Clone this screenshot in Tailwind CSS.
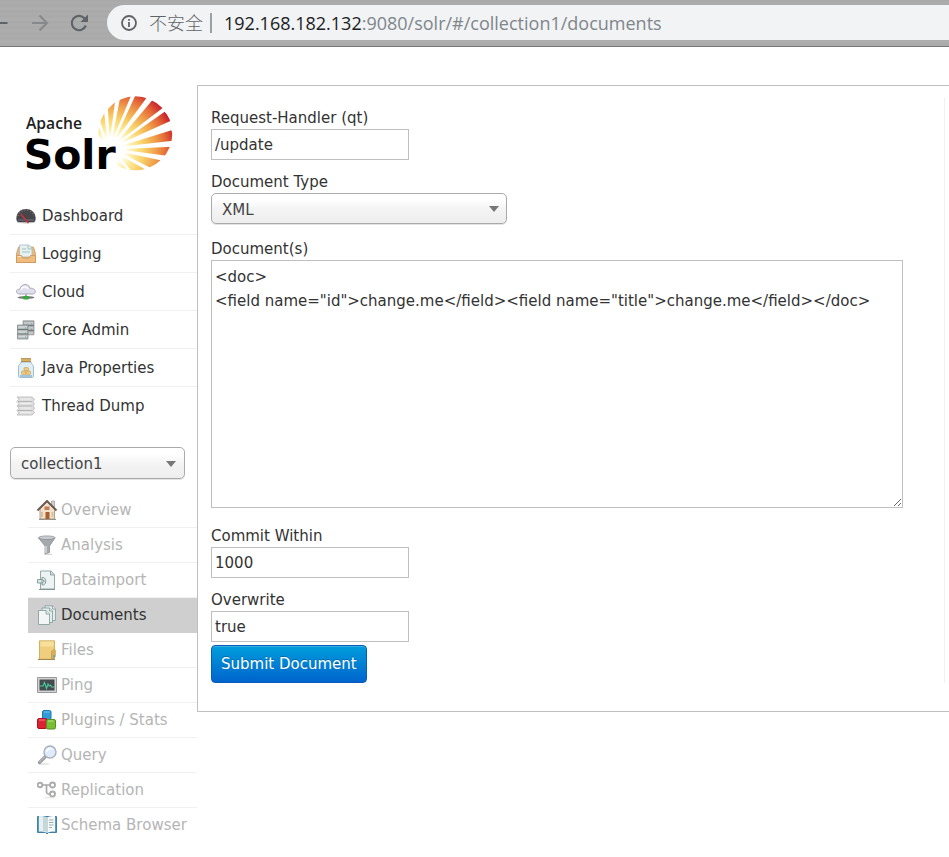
<!DOCTYPE html>
<html lang="en">
<head>
<meta charset="utf-8">
<title>Solr Admin</title>
<script src="https://cdn.jsdelivr.net/npm/@tailwindcss/browser@4"></script>
</head>
<body class="min-h-screen bg-white font-['DejaVu_Sans',sans-serif] text-[15px] leading-6 text-[#333]">

<header class="flex h-[47px] items-start overflow-hidden border-b border-[#777] bg-[#a9a9a9] bg-[repeating-linear-gradient(180deg,#a8a8a8_0px,#adadad_3px,#a9a9a9_5px,#aeaeae_9px,#a8a8a8_11px)] pt-[5px]">
  <div class="flex h-[35px] w-[107px] shrink-0 items-center">
    <button aria-label="Back" class="w-[30px]"><svg class="block h-6 w-[30px]" viewBox="0 0 30 24"><path d="M0 12h7.500" stroke="#5f6368" stroke-width="2" fill="none"/></svg></button>
    <button aria-label="Forward" class="w-[34px]"><svg class="block h-6 w-[34px]" viewBox="0 0 34 24"><path d="M2 12h15M9.500 4.500l7.500 7.500-7.500 7.500" stroke="#86888a" stroke-width="2" fill="none"/></svg></button>
    <button aria-label="Reload" class="w-[32px]"><svg class="block h-6 w-[32px]" viewBox="0 0 32 24"><path d="M21.800 14.500a7.200 7.200 0 1 1-1.600-7.500l2.500 2.500" stroke="#5f6368" stroke-width="2.200" fill="none"/><path d="M24 3.500v7.500h-7.500z" fill="#5f6368"/></svg></button>
  </div>
  <div class="flex h-[35px] min-w-0 flex-1 items-center rounded-l-full bg-[#f1f3f4] pl-[14px]">
    <svg class="size-4 shrink-0" viewBox="0 0 16 16"><circle cx="8" cy="8" r="7" fill="none" stroke="#5f6368" stroke-width="1.800"/><path d="M8 7v5M8 4v1.800" stroke="#5f6368" stroke-width="1.800"/></svg>
    <span class="ml-3 shrink-0 font-['Open_Sans','Noto_Sans_CJK_SC',sans-serif] text-[18px] font-light text-[#5f6368]">不安全</span>
    <span class="ml-[7px] h-5 w-0.5 shrink-0 bg-[#9aa0a6]"></span>
    <a href="#" class="ml-3 truncate font-['Open_Sans',sans-serif] text-[18px] text-[#80868b]"><span class="text-[#202124]">192.168.182.132</span>:9080/solr/#/collection1/documents</a>
  </div>
</header>

<div class="flex items-start pt-[38px]">
  <aside class="w-[197px] shrink-0 pl-[10px]">
    <a href="#" aria-label="Apache Solr" class="block">
      <svg class="block h-[100px] w-[187px]" viewBox="0 0 561 300">
        <defs>
          <radialGradient id="ray" gradientUnits="userSpaceOnUse" cx="305" cy="195" r="195">
            <stop offset="0.180" stop-color="#fff"/><stop offset="0.340" stop-color="#fdeb9c"/><stop offset="0.500" stop-color="#f9cf68"/><stop offset="0.680" stop-color="#f0a04b"/><stop offset="0.840" stop-color="#e56a38"/><stop offset="1" stop-color="#c8242b"/>
          </radialGradient>
          <clipPath id="disc"><circle cx="376" cy="145" r="111"/></clipPath>
        </defs>
        <g clip-path="url(#disc)" fill="url(#ray)">
          <path d="M288 178 258 146 264 120ZM294 176 268 103 281 72ZM299 174 294 72 315 50ZM304 174 330 40 364 30ZM310 174 379 25 416 30ZM316 177 428 44 462 66ZM320 181 464 80 486 106ZM323 186 484 136 494 167ZM324 193 486 185 470 212ZM324 199 452 226 424 250ZM320 205 408 254 366 260ZM315 210 356 260 322 244Z"/>
        </g>
        <text x="48" y="131" font-family="Open Sans" font-weight="600" font-size="47" fill="#222">Apache</text>
        <text x="41" y="253" font-family="DejaVu Sans" font-weight="700" font-size="123" fill="#000">Solr</text>
      </svg>
    </a>

    <nav aria-label="Main" class="mt-3">
      <ul class="divide-y divide-[#f0f0f0]">
        <li><a href="#" class="flex h-[37px] items-center gap-[6px] pl-[6px]">
          <svg class="size-5" viewBox="0 0 20 20"><ellipse cx="10" cy="16" rx="9.500" ry="1.500" fill="#bbb"/><path d="M.5 14C-.5 7 4.500 3 10 3s10.500 4 9.500 11c-.3 1.800-1.500 2-3 2h-13c-1.500 0-2.700-.2-3-2Z" fill="#45454a"/><path d="M2 10c2-8 14-8 16 0" fill="none" stroke="#77777c" stroke-width="1.500" stroke-dasharray="1 2"/><path d="M2 13h16v2H2z" fill="#5b5a70"/><path d="M4.500 8 12.500 17" stroke="#c93434" stroke-width="1.600"/></svg>
          <span>Dashboard</span></a></li>
        <li><a href="#" class="flex h-[37px] items-center gap-[6px] pl-[6px]">
          <svg class="size-5" viewBox="0 0 20 20"><path d="M2.500 3h15L20 11v7.500H0V11z" fill="#e5b981" stroke="#d49b61" stroke-width=".8"/><path d="M3.500 1h9l3.500 3v9H3.500z" fill="#e7f1f1" stroke="#a8bebe" stroke-width=".8"/><path d="M12 1v4h4M6 5h4M6 8h8" fill="none" stroke="#9fc0be"/><path d="M.5 11.500h5l1.500 2.500h6l1.500-2.500h5v7H.5z" fill="#efbd80" stroke="#cd9354" stroke-width=".8"/><path d="M1.500 12.500h3.500" stroke="#fbe4c2"/></svg>
          <span>Logging</span></a></li>
        <li><a href="#" class="flex h-[37px] items-center gap-[6px] pl-[6px]">
          <svg class="size-5" viewBox="0 0 20 20"><path d="M4 12C-1 12-.5 7 4 7.200 4.500 1.500 13 .8 14 6.300c6-.8 7.500 5.700 2 5.700Z" fill="#dedeec" stroke="#a9a9bb"/><path d="M5 8c1-4 6-4 7-1" stroke="#fff" stroke-width="1.500" fill="none"/><ellipse cx="10" cy="15.500" rx="8.500" ry="1.400" fill="#777"/><path d="M10 12.500V16" stroke="#888" stroke-width="1.500"/><path d="M7.500 14h5v3.500h-5z" fill="#2fae3d"/></svg>
          <span>Cloud</span></a></li>
        <li><a href="#" class="flex h-[37px] items-center gap-[6px] pl-[6px]">
          <svg class="size-5" viewBox="0 0 20 20"><path d="M7 .8h11v14H7z" fill="#a9adaf" stroke="#95999b" stroke-width=".8"/><path d="M7 5.500h11M7 10.500h11" stroke="#767c7f"/><path d="M8 3h9M8 8h9M8 13h9" stroke="#ccd1d1" stroke-width="1.500"/><path d="M1.500 5h10.500v14H1.500z" fill="#b5babb" stroke="#85898b" stroke-width=".8"/><path d="M1.500 9.500H12M1.500 14H12" stroke="#70767a"/><path d="M2.500 7H11M2.500 12H11M2.500 16.500H11" stroke="#d5dada" stroke-width="1.500"/><path d="M9 8h1M9 13h1M9 17h1M15 4h1M15 9h1" stroke="#65a87b"/></svg>
          <span>Core Admin</span></a></li>
        <li><a href="#" class="flex h-[37px] items-center gap-[6px] pl-[6px]">
          <svg class="size-5" viewBox="0 0 20 20"><path d="M5 4h10c0 2 2.500 2.500 2.500 5v9c0 1-.5 1.500-1.500 1.500H4c-1 0-1.500-.5-1.500-1.500V9C2.500 6.500 5 6 5 4Z" fill="#dfedf4" stroke="#9cbfd4"/><path d="M5 .5h10V4H5z" fill="#d7b064"/><path d="M5 3.500h10M5 .6h10" stroke="#a98246" stroke-width=".8"/><path d="M4 18h12" stroke="#8cb6cf" stroke-width="1.500"/><g fill="#ecc97e" stroke="#cda35c" stroke-width=".7"><rect x="8" y="9.500" width="4.500" height="3.500" rx="1"/><rect x="5.500" y="13" width="4.500" height="3.500" rx="1"/><rect x="10" y="13" width="4.500" height="3.500" rx="1"/></g></svg>
          <span>Java Properties</span></a></li>
        <li><a href="#" class="flex h-[37px] items-center gap-[6px] pl-[6px]">
          <svg class="size-5" viewBox="0 0 20 20"><path d="M1 1h15l2.500 2.200-1.500 2.300 1.500 2.200-1.500 2.300 1.500 2.200-1.500 2.300 1.500 2.200-2.500 2.300H1l2-2.300-2-2.200 2-2.300-2-2.200 2-2.300-2-2.200 2-2.300z" fill="#dedede" stroke="#bbb" stroke-width=".9"/><path d="M2 5.500h14M2 10h14M2 14.500h14" stroke="#b5b5b5"/><path d="M4 3h11M4 7.500h11M4 12h11M4 16.500h11" stroke="#f0f0f0" stroke-width="1.200"/></svg>
          <span>Thread Dump</span></a></li>
      </ul>
    </nav>

    <div class="relative mt-[23px] mr-3">
      <select aria-label="Core" class="block h-8 w-full appearance-none rounded-[5px] border border-[#aaa] bg-linear-to-b from-white from-20% via-[#f4f4f4] via-50% to-[#eee] pt-0.5 pr-6 pl-[10px] text-[15px] text-[#444] shadow-[0_1px_0_#e4e4e4]"><option>collection1</option></select>
      <svg class="pointer-events-none absolute top-[14px] right-[9px] h-[6px] w-[10px]" viewBox="0 0 10 6"><path d="M0 0h10L5 6z" fill="#777"/></svg>
    </div>

    <nav aria-label="Core" class="mt-[14px] ml-[18px] text-[#b5b5b5]">
      <ul>
        <li class="border-b border-[#f0f0f0]"><a href="#" class="flex h-[34px] items-center gap-1 pl-[9px]">
          <svg class="size-5" viewBox="0 0 20 20"><path d="M14.500 1h3v7h-3z" fill="#d9d0c8" stroke="#888" stroke-width=".6"/><path d="M3 9l7-7 7.500 7v10H3z" fill="#f1e2cd" stroke="#a58d76" stroke-width=".8"/><path d="M.5 10.500 10 1l9.500 9.500" fill="none" stroke="#6d5c55" stroke-width="2"/><path d="M7.500 6.500h5V10h-5z" fill="#bf7f55"/><path d="M8.500 12h4v7h-4z" fill="#a95f2b"/><path d="M4 12h2v5H4zM14.500 12h2v5h-2z" fill="#dcbda0"/><path d="M2 19.400h17" stroke="#8e8a83"/></svg>
          <span>Overview</span></a></li>
        <li class="border-b border-[#f0f0f0]"><a href="#" class="flex h-[34px] items-center gap-1 pl-[9px]">
          <svg class="size-5" viewBox="0 0 20 20"><path d="M1.500 3 8 11v8l4.500-1.500V11L18 3z" fill="#a5a8ac" stroke="#83868b" stroke-width=".7"/><path d="M9 11v7" stroke="#d9dade" stroke-width="1.500"/><ellipse cx="9.800" cy="2.700" rx="8.300" ry="1.800" fill="#c9ccd0" stroke="#83868b" stroke-width=".7"/><path d="M7 19.300h8" stroke="#ccc"/></svg>
          <span>Analysis</span></a></li>
        <li class="border-b border-[#f0f0f0]"><a href="#" class="flex h-[34px] items-center gap-1 pl-[9px]">
          <svg class="size-5" viewBox="0 0 20 20"><path d="M3.500 1H14l3.500 3.500V19h-14z" fill="#ecf3f2" stroke="#92a9a7"/><path d="M13.500 1v4h4" fill="#c9dad8" stroke="#92a9a7"/><path d="M.5 9.500H5V13H.5z" fill="#dce7e6" stroke="#7c9695" stroke-width=".9"/><path d="M5 7.500c5-1 5 8.500 0 7.500V13l2.500-1.800L5 9.500z" fill="#dce7e6" stroke="#7c9695" stroke-width=".9"/><path d="M2 19.500h16" stroke="#879391"/></svg>
          <span>Dataimport</span></a></li>
        <li class="border-b border-[#cfcfcf] bg-[#cfcfcf] text-[#333]"><a href="#" aria-current="page" class="flex h-[34px] items-center gap-1 pl-[9px]">
          <svg class="size-5" viewBox="0 0 20 20"><g fill="#e3edec" stroke="#839b99" stroke-width=".8"><path d="M8 .8h7.500L18.500 4v11.500H8z"/><path d="M15.500.8V4h3"/><path d="M5 3h7.500l3 3v11.500H5z"/><path d="M12.500 3v3h3"/><path d="M1.500 5.500H9l3.500 3.500v10.500h-11z" fill="#f2f7f6"/><path d="M9 5.500V9h3.500"/></g></svg>
          <span>Documents</span></a></li>
        <li class="border-b border-[#f0f0f0]"><a href="#" class="flex h-[34px] items-center gap-1 pl-[9px]">
          <svg class="size-5" viewBox="0 0 20 20"><path d="M2.500.8h15v18.400h-15z" fill="#efcf7d" stroke="#c99f4b" stroke-width=".8"/><path d="M3.500 1.500h13v5h-13z" fill="#f7e09c"/><path d="M14.500 11.500 17.500 9l.8 1.500v6l-2.300 2.700h-1.500z" fill="#dcb057" stroke="#bd9342" stroke-width=".7"/><path d="M17 15v2.500" stroke="#4fa9d6" stroke-width="1.500"/><path d="M1 19.500h17" stroke="#a28b58"/></svg>
          <span>Files</span></a></li>
        <li class="border-b border-[#f0f0f0]"><a href="#" class="flex h-[34px] items-center gap-1 pl-[9px]">
          <svg class="size-5" viewBox="0 0 20 20"><path d="M.5 2.500h19v15H.5z" fill="#d3d3d3" stroke="#999"/><path d="M2.500 4.500h15v11h-15z" fill="#454b4e"/><path d="M3 11h3l1.500-3.500 2 6L11 9l1.200 2 1.300-1 1 2H17" fill="none" stroke="#48cda0" stroke-width="1.100"/></svg>
          <span>Ping</span></a></li>
        <li class="border-b border-[#f0f0f0]"><a href="#" class="flex h-[34px] items-center gap-1 pl-[9px]">
          <svg class="size-5" viewBox="0 0 20 20"><rect x="5.500" y=".5" width="8.500" height="9" rx="1.500" fill="#309bd5" stroke="#1b79b4"/><path d="M7 2h5.500" stroke="#7cc7ed"/><rect x=".5" y="8.500" width="9.500" height="10" rx="1.500" fill="#dd2233" stroke="#ad1220"/><path d="M2 10h6" stroke="#f0808a"/><rect x="9.500" y="9.500" width="9" height="9.500" rx="1.500" fill="#79bd35" stroke="#4f9220"/><path d="M11 11h5.500" stroke="#b6e485"/></svg>
          <span>Plugins / Stats</span></a></li>
        <li class="border-b border-[#f0f0f0]"><a href="#" class="flex h-[34px] items-center gap-1 pl-[9px]">
          <svg class="size-5" viewBox="0 0 20 20"><ellipse cx="7" cy="19" rx="6" ry=".8" fill="#ddd"/><path d="M8.500 11.500 2.500 17.500" stroke="#9a9da2" stroke-width="3.200" stroke-linecap="round"/><path d="M8 11.500 2.500 17" stroke="#c9cbd0"/><circle cx="13" cy="7" r="6" fill="#dfebfa" stroke="#aab0bb" stroke-width="1.400"/><path d="M9.500 7c.5-3 3.500-4 5.500-3" stroke="#fff" stroke-width="1.500" fill="none"/></svg>
          <span>Query</span></a></li>
        <li class="border-b border-[#f0f0f0]"><a href="#" class="flex h-[34px] items-center gap-1 pl-[9px]">
          <svg class="size-5" viewBox="0 0 20 20"><path d="M5 5h8M9.500 5v6.500c0 2.300 1 2.500 3.500 2.500" fill="none" stroke="#a9a9a9" stroke-width="1.700"/><g fill="#fff" stroke="#acacac" stroke-width="1.900"><circle cx="3" cy="5" r="2.300"/><circle cx="15.500" cy="5" r="2.500"/><circle cx="15.500" cy="14" r="2.500"/></g><path d="M8 17.800h10" stroke="#e2e2e2"/></svg>
          <span>Replication</span></a></li>
        <li><a href="#" class="flex h-[34px] items-center gap-1 pl-[9px]">
          <svg class="size-5" viewBox="0 0 20 20"><path d="M.5 1.500h19v16h-8L10 19l-1.500-1.500h-8z" fill="#5b9cc2" stroke="#39769c" stroke-width=".9"/><path d="M2 1c3 0 6 0 8 1.500V18c-2-1.500-5-1.500-8-1.500z" fill="#e6f0ef"/><path d="M18 1c-3 0-6 0-8 1.500V18c2-1.500 5-1.500 8-1.500z" fill="#f6f9f8"/><path d="M10 2.500V18" stroke="#9db5b7"/><path d="M6 2c2 0 3 .5 4 1v14c-1-1-2-1-4-1z" fill="#c4d8d9"/><path d="M12 5h4.500M12 7.500h4.500M12 10h4.500M12 12.500h3" stroke="#9cadb0"/></svg>
          <span class="whitespace-nowrap">Schema Browser</span></a></li>
      </ul>
    </nav>
  </aside>

  <main class="min-w-0 flex-1 border-y border-l border-[#bfbfbf] pt-3 pb-7 pl-[13px]">
    <form class="mr-1 flex flex-col items-start border-r border-[#f0f0f0] pt-[9px]">
      <label for="qt" class="leading-[22px]">Request-Handler (qt)</label>
      <input id="qt" type="text" value="/update" class="h-[31px] w-[198px] border border-[#bfbfbf] px-[3px]">

      <label for="type" class="mt-[11px] leading-[22px]">Document Type</label>
      <div class="relative w-[296px]">
        <select id="type" class="block h-[31px] w-full appearance-none rounded-[5px] border border-[#aaa] bg-linear-to-b from-white from-20% via-[#f4f4f4] via-50% to-[#eee] pt-0.5 pr-6 pl-[10px] text-[#444] shadow-[0_1px_0_#e4e4e4]"><option>XML</option></select>
        <svg class="pointer-events-none absolute top-[13px] right-2 h-[6px] w-[10px]" viewBox="0 0 10 6"><path d="M0 0h10L5 6z" fill="#777"/></svg>
      </div>

      <label for="doc" class="mt-[14px] leading-[22px]">Document(s)</label>
      <div class="w-full pr-[41px]">
        <textarea id="doc" class="block h-[248px] w-full border border-[#bfbfbf] px-[3px] py-1">&lt;doc&gt;
&lt;field name="id"&gt;change.me&lt;/field&gt;&lt;field name="title"&gt;change.me&lt;/field&gt;&lt;/doc&gt;</textarea>
      </div>

      <label for="commit" class="mt-[17px] leading-[22px]">Commit Within</label>
      <input id="commit" type="text" value="1000" class="h-[31px] w-[198px] border border-[#bfbfbf] px-[3px]">

      <label for="overwrite" class="mt-[11px] leading-[22px]">Overwrite</label>
      <input id="overwrite" type="text" value="true" class="h-[31px] w-[198px] border border-[#bfbfbf] px-[3px]">

      <button type="button" class="mt-[3px] h-[38px] rounded-[4px] border border-[#0a5cb8] bg-linear-to-b from-[#049cdb] to-[#0064cd] px-[9px] whitespace-nowrap text-white shadow-[inset_0_1px_0_#ffffff33] text-shadow-[0_-1px_0_#00000040]">Submit Document</button>
    </form>
  </main>
</div>
</body>
</html>
